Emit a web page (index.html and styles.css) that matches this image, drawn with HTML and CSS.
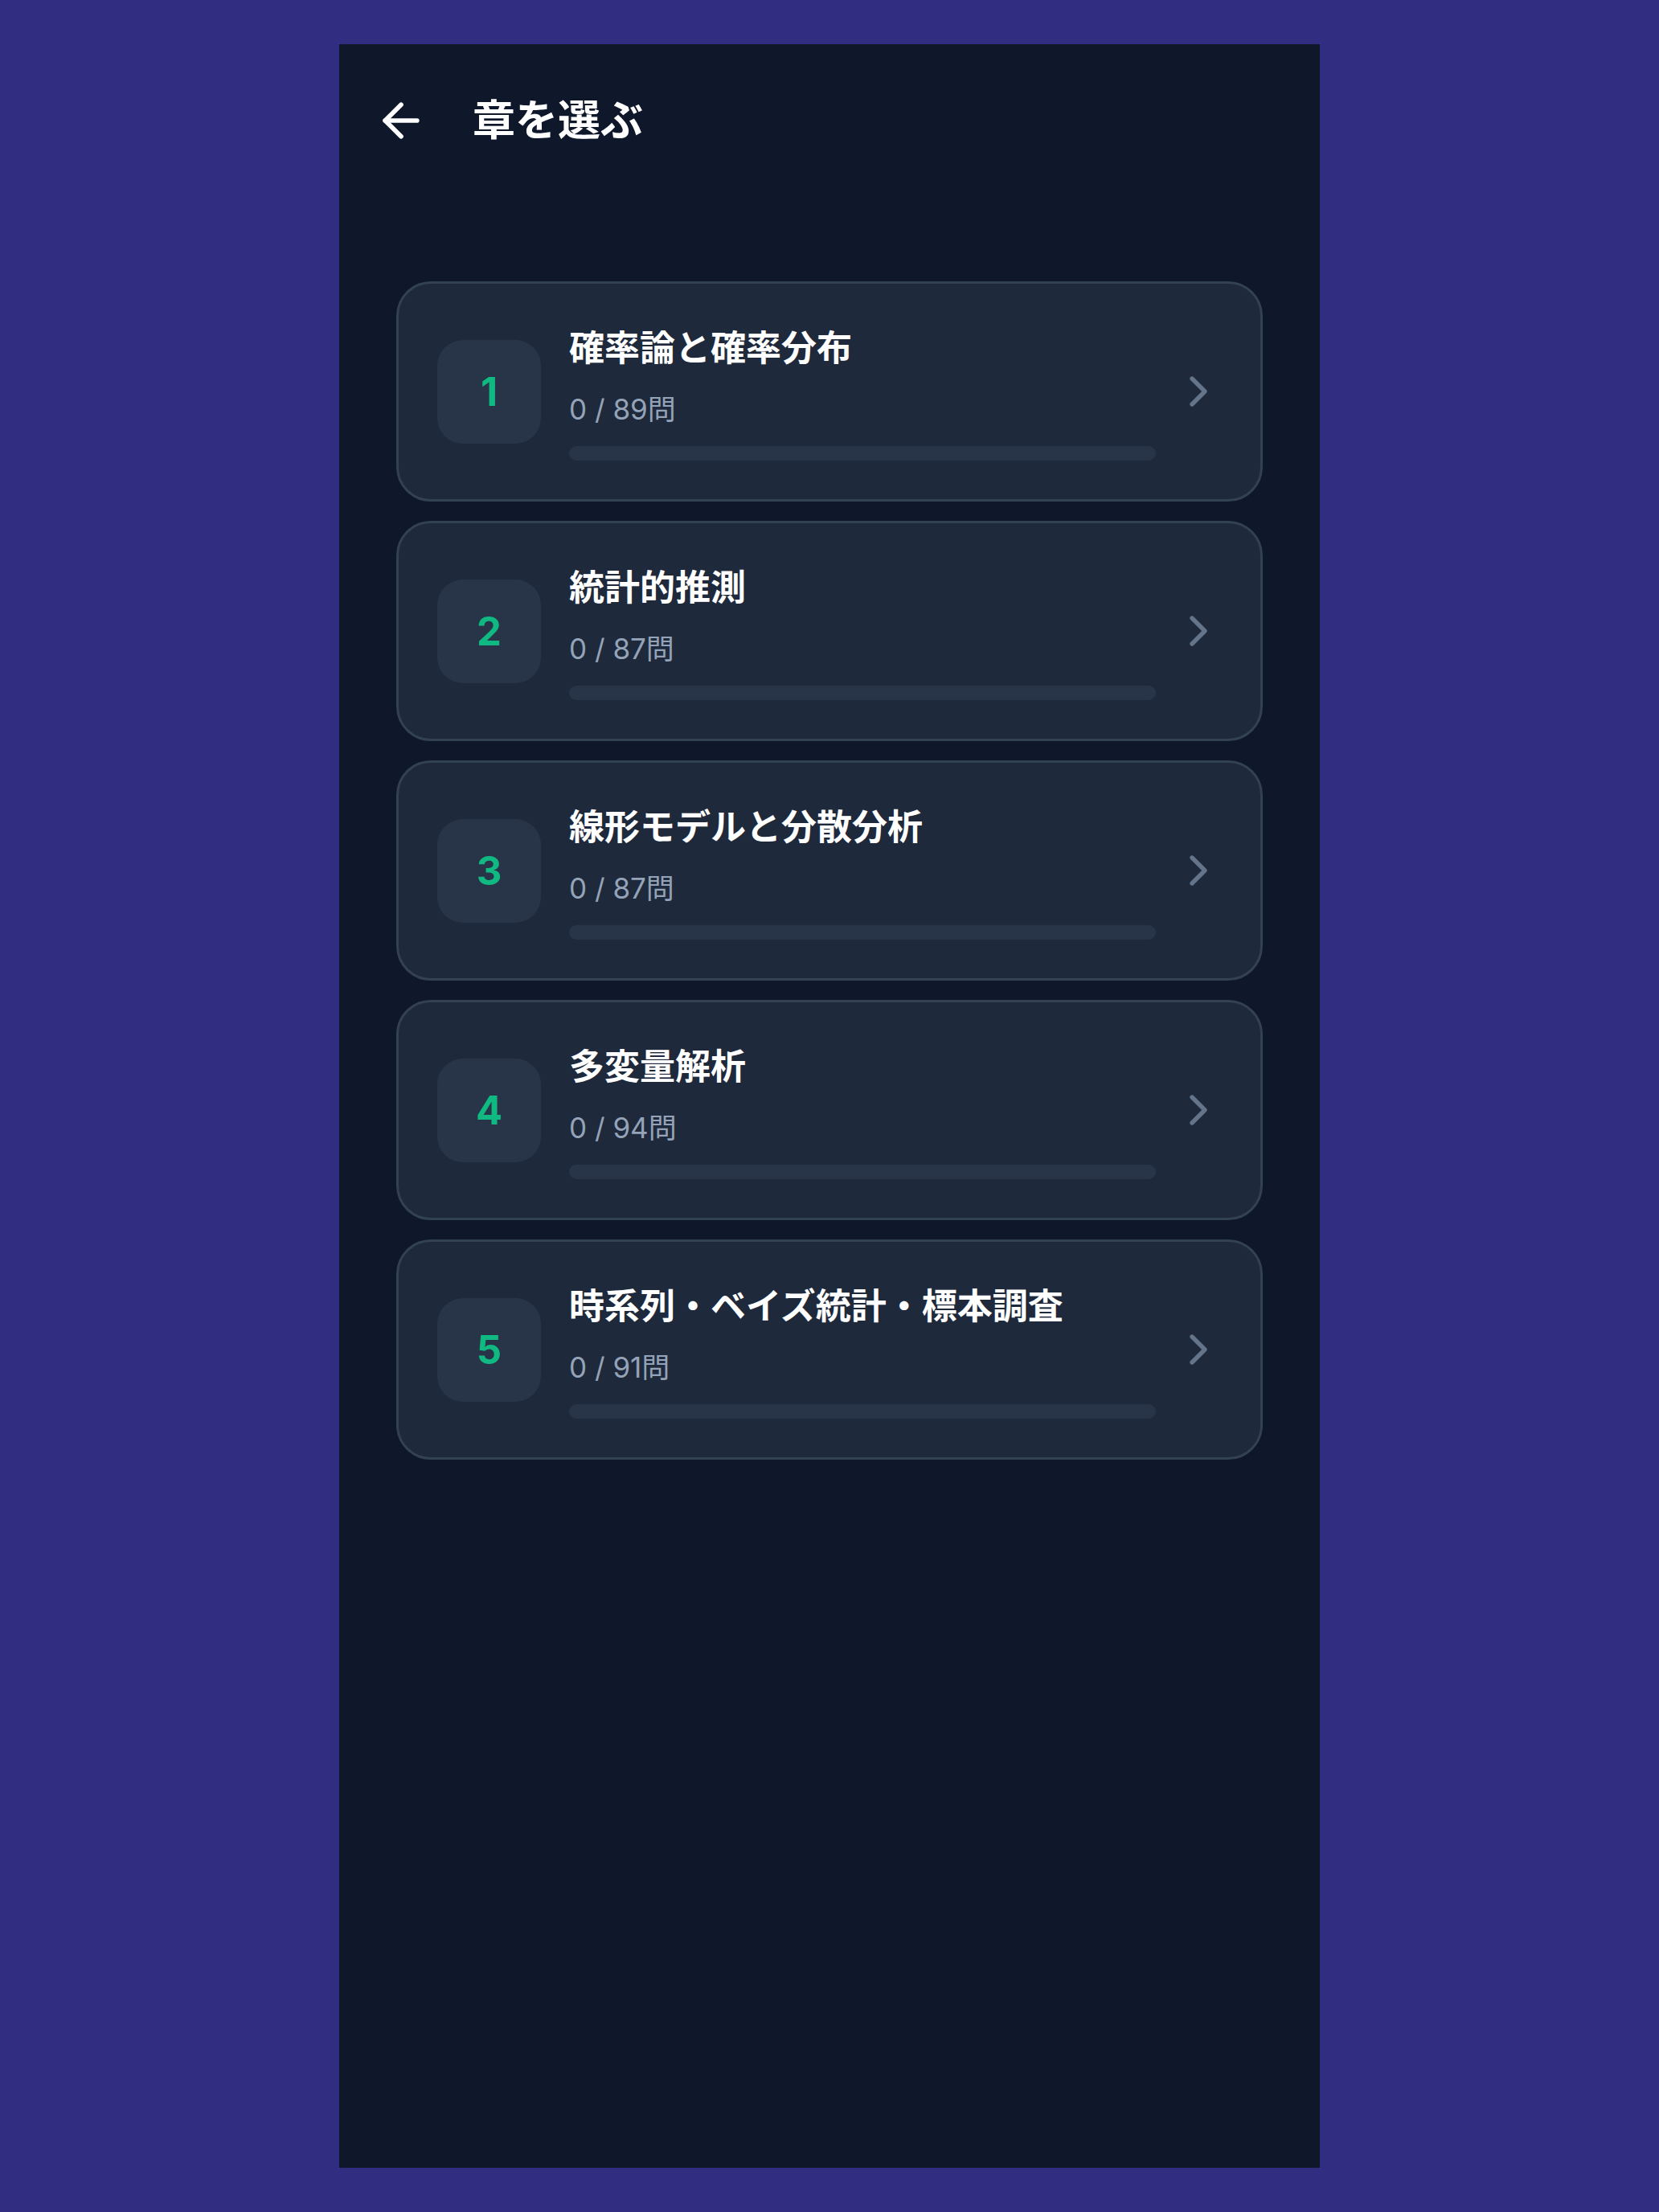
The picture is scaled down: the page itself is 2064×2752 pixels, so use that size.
FILE: index.html
```html
<html>
<head>
<meta charset="utf-8">
<link rel="stylesheet" href="styles.css">
</head>
<body>
<div id="screen">
	<header class="topbar">
		<a href="#" class="back">
			<svg viewBox="0 0 24 24" fill="none" stroke="currentColor" stroke-width="2" stroke-linecap="round" stroke-linejoin="round"><path d="m12 19-7-7 7-7"/><path d="M19 12H5"/></svg>
		</a>
		<h1>章を選ぶ</h1>
	</header>
	<div class="chapters">
		<a href="#" class="chapter">
			<div class="num">1</div>
			<div class="info">
				<div class="title">確率論と確率分布</div>
				<div class="count">0 / 89問</div>
				<div class="bar"><div class="fill" style="width: 0%"></div></div>
			</div>
			<svg class="chev" viewBox="0 0 24 24" fill="none" stroke="currentColor" stroke-width="2" stroke-linecap="round" stroke-linejoin="round"><path d="m9 18 6-6-6-6"/></svg>
		</a>
		<a href="#" class="chapter">
			<div class="num">2</div>
			<div class="info">
				<div class="title">統計的推測</div>
				<div class="count">0 / 87問</div>
				<div class="bar"><div class="fill" style="width: 0%"></div></div>
			</div>
			<svg class="chev" viewBox="0 0 24 24" fill="none" stroke="currentColor" stroke-width="2" stroke-linecap="round" stroke-linejoin="round"><path d="m9 18 6-6-6-6"/></svg>
		</a>
		<a href="#" class="chapter">
			<div class="num">3</div>
			<div class="info">
				<div class="title">線形モデルと分散分析</div>
				<div class="count">0 / 87問</div>
				<div class="bar"><div class="fill" style="width: 0%"></div></div>
			</div>
			<svg class="chev" viewBox="0 0 24 24" fill="none" stroke="currentColor" stroke-width="2" stroke-linecap="round" stroke-linejoin="round"><path d="m9 18 6-6-6-6"/></svg>
		</a>
		<a href="#" class="chapter">
			<div class="num">4</div>
			<div class="info">
				<div class="title">多変量解析</div>
				<div class="count">0 / 94問</div>
				<div class="bar"><div class="fill" style="width: 0%"></div></div>
			</div>
			<svg class="chev" viewBox="0 0 24 24" fill="none" stroke="currentColor" stroke-width="2" stroke-linecap="round" stroke-linejoin="round"><path d="m9 18 6-6-6-6"/></svg>
		</a>
		<a href="#" class="chapter">
			<div class="num">5</div>
			<div class="info">
				<div class="title">時系列・ベイズ統計・標本調査</div>
				<div class="count">0 / 91問</div>
				<div class="bar"><div class="fill" style="width: 0%"></div></div>
			</div>
			<svg class="chev" viewBox="0 0 24 24" fill="none" stroke="currentColor" stroke-width="2" stroke-linecap="round" stroke-linejoin="round"><path d="m9 18 6-6-6-6"/></svg>
		</a>
	</div>
</div>
</body>
</html>
```

FILE: styles.css
```css
html,body {
	margin: 0;
	padding: 0;
	background: #312e81;
	font-family: Inter, "Noto Sans CJK JP", sans-serif;
}
body {
	padding: 55px 0;
}
#screen {
	box-sizing: border-box;
	width: 1220px;
	height: 2642px;
	margin: 0 auto;
	background: #0f172a;
	color: #f8fafc;
}

.topbar {
	display: flex;
	align-items: center;
	height: 190px;
	padding-left: 43px;
}
.back {
	display: block;
	width: 68px;
	height: 68px;
	color: #fff;
}
.back svg {
	display: block;
	width: 68px;
	height: 68px;
}
.topbar h1 {
	margin: 0 0 0 55px;
	font-size: 53px;
	font-weight: 700;
	line-height: 1.3;
	color: #fff;
}

.chapters {
	display: flex;
	flex-direction: column;
	gap: 24px;
	padding: 105px 71px 0 71px;
}
.chapter {
	display: flex;
	align-items: center;
	padding: 48px 45px 48px 48px;
	background: #1e293b;
	border: 3px solid #334155;
	border-radius: 43px;
	text-decoration: none;
	color: inherit;
}
.num {
	flex: none;
	display: flex;
	align-items: center;
	justify-content: center;
	width: 129px;
	height: 129px;
	border-radius: 32px;
	background: #283548;
	color: #10b981;
	font-size: 49px;
	font-weight: 700;
}
.info {
	flex: 1;
	margin: 0 21px 0 35px;
}
.title {
	font-size: 44px;
	font-weight: 700;
	line-height: 64px;
	color: #fff;
	white-space: nowrap;
}
.count {
	margin-top: 20px;
	font-size: 35px;
	line-height: 48px;
	color: #94a3b8;
}
.bar {
	margin-top: 22px;
	height: 18px;
	border-radius: 9px;
	background: #283548;
	overflow: hidden;
}
.bar .fill {
	height: 100%;
	background: #10b981;
}
.chev {
	flex: none;
	width: 64px;
	height: 64px;
	color: #64748b;
}
```
